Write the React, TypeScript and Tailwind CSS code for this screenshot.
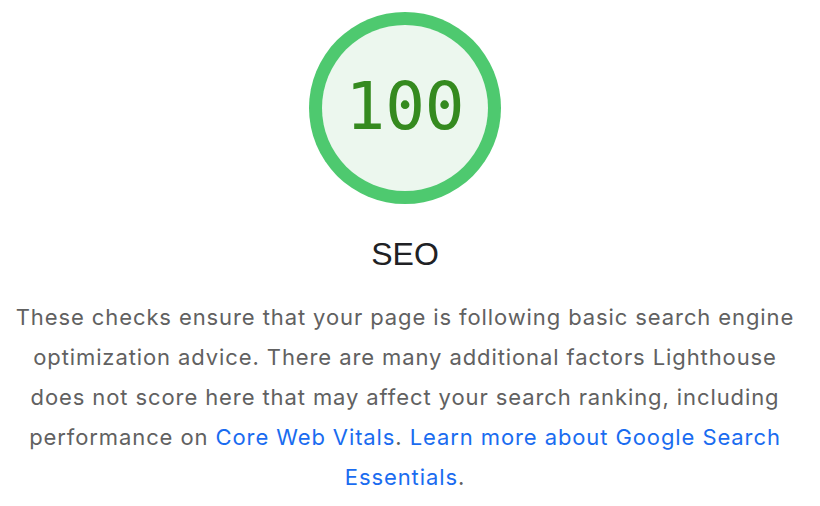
import React from "react";

const ScoreGauge = ({ score }: { score: number }) => {
  return (
    <div className="w-[192px] h-[192px] rounded-full bg-[#4ec96f] p-[13px]">
      <div className="w-full h-full rounded-full bg-[#ecf7ee] flex items-center justify-center">
        <span className="font-['DejaVu_Sans_Mono',monospace] text-[66px] leading-none text-[#358a1f] pb-[2px]">
          {score}
        </span>
      </div>
    </div>
  );
};

const App = () => {
  return (
    <div className="w-[810px] h-[506px] bg-white flex flex-col items-center pt-[12px] font-['Inter',sans-serif]">
      <ScoreGauge score={100} />

      <h2 className="mt-[30px] text-[32px] leading-[40px] text-[#202124] font-['Liberation_Sans',Arial,sans-serif]">
        SEO
      </h2>

      <p className="mt-[23px] text-center text-[22px] leading-[40px] tracking-[0.9px] text-[#616161]">
        These checks ensure that your page is following basic search engine
        <br />
        optimization advice. There are many additional factors Lighthouse
        <br />
        does not score here that may affect your search ranking, including
        <br />
        performance on{" "}
        <a href="#" className="text-[#1a6cf0]">
          Core Web Vitals
        </a>
        .{" "}
        <a href="#" className="text-[#1a6cf0]">
          Learn more about Google Search
          <br />
          Essentials
        </a>
        .
      </p>
    </div>
  );
};

export default App;
